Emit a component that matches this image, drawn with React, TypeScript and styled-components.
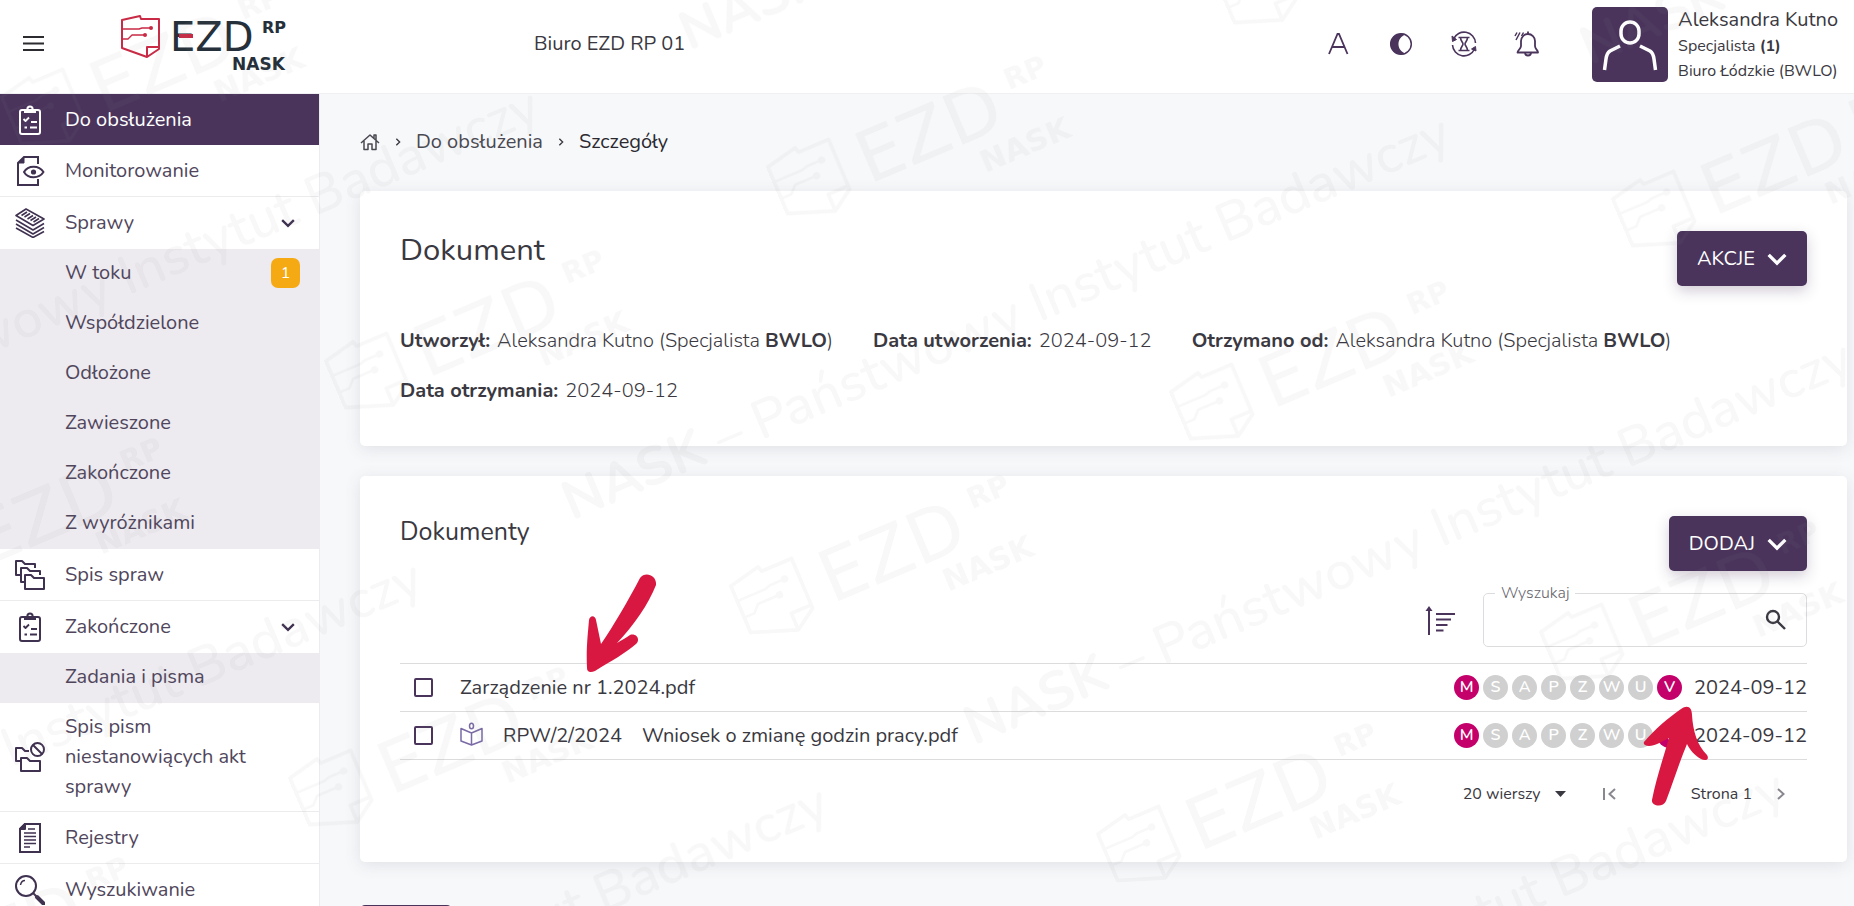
import React from 'react';
import styled, { createGlobalStyle } from 'styled-components';

const purple = '#4a345c';
const ink = '#3a3840';

const GlobalStyle = createGlobalStyle`
  *, *::before, *::after { box-sizing: border-box; }
  body {
    margin: 0;
    background: #f7f8fa;
    color: ${ink};
    font-family: Nunito, "Noto Sans", sans-serif;
    font-size: 20px;
    font-weight: 400;
    line-height: 30px;
  }
  button, input, select { font: inherit; color: inherit; }
  a { color: inherit; text-decoration: none; }
  b { font-weight: 700; }
`;

const Shell = styled.div`
  position: relative;
  height: 100vh;
  overflow: hidden;
  display: flex;
  flex-direction: column;
`;

const TopBar = styled.header`
  flex: none;
  height: 94px;
  display: flex;
  align-items: center;
  padding: 0 16px 5px 20px;
  background: #fff;
  border-bottom: 1px solid #f0f0f2;
`;

const IconButton = styled.button`
  display: grid;
  place-items: center;
  padding: 0;
  border: 0;
  background: none;
  color: ${purple};
`;

const LogoLink = styled.a`
  margin-left: 73px;
  display: block;
  height: 60px;
`;

const Unit = styled.div`
  margin-left: 244px;
  flex: 1;
`;

const Tools = styled.div`
  display: flex;
  gap: 33px;
  margin-right: 50px;
`;

const Account = styled.div`
  display: flex;
  gap: 10px;
  align-items: center;
`;

const Avatar = styled.div`
  width: 76px;
  height: 75px;
  border-radius: 5px;
  background: ${purple};
`;

const Person = styled.div`
  display: grid;
  grid-template-rows: 28px 25px 24px;
  align-items: center;
  font-size: 16px;
`;

const PersonName = styled.div`
  font-size: 20px;
`;

const Body = styled.div`
  flex: 1;
  min-height: 0;
  display: flex;
`;

const Sidebar = styled.nav`
  flex: none;
  width: 320px;
  background: #fff;
  border-right: 1px solid #ececf0;
  overflow: hidden;
`;

const NavList = styled.ul`
  list-style: none;
  margin: 0;
  padding: 0;
`;

const NavLink = styled.a<{ $active?: boolean; $line?: boolean }>`
  display: grid;
  grid-template-columns: 50px 1fr auto;
  align-items: center;
  min-height: ${p => (p.$active ? 51 : 52)}px;
  padding: 9px 24px 9px 15px;
  color: ${p => (p.$active ? '#fff' : '#50465c')};
  background: ${p => (p.$active ? purple : 'transparent')};
  border-bottom: ${p => (p.$line ? '1px solid #ececee' : '0')};
  svg { color: ${p => (p.$active ? '#fff' : '#3f3150')}; }
`;

const SubList = styled(NavList)`
  background: #edeaf0;
`;

const SubLink = styled.a`
  display: flex;
  justify-content: space-between;
  align-items: center;
  height: 50px;
  padding: 0 19px 2px 65px;
  color: #50465c;
`;

const Count = styled.span`
  width: 29px;
  height: 30px;
  border-radius: 7px;
  background: #f5aa14;
  color: #fff;
  font-size: 16px;
  text-align: center;
`;

const Main = styled.main`
  flex: 1;
  min-width: 0;
  padding: 33px 7px 0 40px;
  display: flex;
  flex-direction: column;
  gap: 30px;
`;

const Crumbs = styled.nav`
  display: flex;
  align-items: center;
  height: 30px;
  gap: 14px;
  margin-bottom: 4px;
`;

const CrumbLink = styled.a<{ $current?: boolean }>`
  display: flex;
  color: ${p => (p.$current ? '#2b2930' : '#4a4850')};
`;

const Card = styled.section<{ $bottom: number }>`
  position: relative;
  padding: 40px 40px ${p => p.$bottom}px;
  background: #fff;
  border-radius: 5px;
  box-shadow: 0 3px 16px rgba(60, 80, 90, 0.13);
`;

const CardHead = styled.div`
  display: flex;
  justify-content: space-between;
  align-items: flex-start;
`;

const Title = styled.h1`
  margin: 0;
  font-size: 31px;
  line-height: 38px;
  font-weight: 400;
`;

const Subtitle = styled.h2`
  margin: 0;
  font-size: 25px;
  line-height: 32px;
  font-weight: 400;
`;

const ActionButton = styled.button`
  display: flex;
  align-items: center;
  gap: 12px;
  height: 55px;
  padding: 0 20px;
  border: 0;
  border-radius: 5px;
  background: ${purple};
  color: #fff;
  box-shadow: 0 5px 14px rgba(74, 52, 92, 0.25);
`;

const Meta = styled.dl`
  display: flex;
  flex-wrap: wrap;
  gap: 20px 40px;
  margin: 40px 0 0;
`;

const MetaItem = styled.div`
  display: flex;
  gap: 7px;
  dt { font-weight: 700; }
  dd { margin: 0; font-weight: 300; }
`;

const Filters = styled.div`
  display: flex;
  justify-content: flex-end;
  align-items: flex-end;
  gap: 28px;
  margin: 13px 0 16px;
`;

const SortButton = styled(IconButton)`
  height: 55px;
`;

const SearchField = styled.fieldset`
  display: flex;
  align-items: center;
  width: 324px;
  height: 63px;
  margin: 0;
  padding: 0 19px 8px 17px;
  border: 1px solid #dcdcdf;
  border-radius: 5px;
  legend {
    padding: 0 6px 0 3px;
    margin-left: -6px;
    font-size: 16px;
    font-weight: 300;
    line-height: 18px;
    color: #66646c;
  }
  label { padding-left: 3px; }
  input {
    flex: 1;
    min-width: 0;
    border: 0;
    outline: 0;
    background: none;
  }
`;

const Files = styled.table`
  width: 100%;
  border-collapse: collapse;
  border-top: 1px solid #dcdcde;
`;

const FileRow = styled.tr`
  height: 48px;
  border-bottom: 1px solid #dcdcde;
  td { padding: 0; }
`;

const PickCell = styled.td`
  width: 60px;
`;

const Pick = styled.input`
  appearance: none;
  display: block;
  width: 19px;
  height: 19px;
  margin: 0 0 0 14px;
  border: 2px solid ${purple};
  border-radius: 2px;
`;

const FileName = styled.a`
  display: flex;
  align-items: center;
  gap: 20px;
  svg { margin-top: -4px; }
`;

const FlagsCell = styled.td`
  width: 240px;
`;

const Flags = styled.div`
  display: flex;
  gap: 4px;
`;

const Flag = styled.span<{ $on: boolean }>`
  width: 25px;
  height: 25px;
  border-radius: 50%;
  background: ${p => (p.$on ? '#c4006b' : '#d0d0d0')};
  color: #fff;
  font-size: 16px;
  line-height: 25px;
  font-weight: 600;
  text-align: center;
`;

const DateCell = styled.td`
  width: 112px;
  text-align: right;
  white-space: nowrap;
`;

const Pager = styled.div`
  display: flex;
  justify-content: flex-end;
  align-items: center;
  margin-top: 19px;
  padding-right: 21px;
  font-size: 16px;
`;

const PageSize = styled.label`
  display: flex;
  align-items: center;
  margin-right: 36px;
  select {
    appearance: none;
    width: 92px;
    padding: 0;
    border: 0;
    background: none;
  }
`;

const PageLabel = styled.span`
  margin: 0 24px 0 75px;
`;

const NextButton = styled.button`
  align-self: flex-start;
  flex: none;
  height: 55px;
  width: 92px;
  margin-top: 13px;
  border: 0;
  border-radius: 5px;
  background: ${purple};
`;

const StartArrow = styled.svg`
  position: absolute;
  left: 226px;
  top: 97px;
`;

const EndArrow = styled.svg`
  position: absolute;
  right: 138px;
  top: 229px;
`;

const WatermarkLayer = styled.svg`
  position: absolute;
  inset: 0;
  width: 100%;
  height: 100%;
  pointer-events: none;
`;

/* Brand artwork */

const Emblem = ({ color }: { color: string }) => (
  <g fill="none" stroke={color} strokeWidth="2" strokeLinejoin="round">
    <path d="M2 5 L20 1 L21 4 H39 V34 L27 42 L2 33 Z" />
    <path d="M27 42 V32 H39" />
    <path d="M2 14 H19 L22 13 H30 M2 24 H8 L12 20 H24" strokeWidth="1.4" />
    <circle cx="31" cy="13" r="2" fill={color} stroke="none" />
    <circle cx="25" cy="20" r="2" fill={color} stroke="none" />
  </g>
);

const BrandText = ({ color, accent }: { color: string; accent?: string }) => (
  <g fill={color} fontFamily='"DejaVu Sans", sans-serif'>
    <text x="50" y="36" fontSize="40">EZD</text>
    {accent && <rect x="59" y="19" width="14" height="4" fill={accent} />}
    <text x="142" y="18" fontSize="16" fontWeight="700">RP</text>
    <text x="112" y="55" fontSize="17" fontWeight="700">NASK</text>
  </g>
);

const Logo = () => (
  <svg width="170" height="60" aria-label="EZD RP NASK">
    <g transform="translate(0 1)">
      <Emblem color="#c92a45" />
      <BrandText color="#26303a" accent="#c92a45" />
    </g>
  </svg>
);

const logoSpots = [
  [43, 111], [809, 181], [367, 375], [-75, 563], [1256, -10], [1654, 213],
  [1212, 406], [772, 600], [331, 792], [1582, 646], [1139, 848], [-109, 982],
];

const textSpots = [
  [543, 119], [1454, 146], [1856, 371], [426, 591], [832, 816], [1789, 801],
  [1571, -324], [2472, -309],
];

const Watermark = () => (
  <WatermarkLayer aria-hidden="true">
    <g opacity="0.065">
      {logoSpots.map(([x, y]) => (
        <g key={`${x}:${y}`} transform={`translate(${x} ${y}) rotate(-23) scale(1.8) translate(-20 -21)`}>
          <Emblem color="#8a8a8a" />
          <BrandText color="#8a8a8a" />
        </g>
      ))}
      {textSpots.map(([x, y]) => (
        <text
          key={`${x}:${y}`}
          transform={`translate(${x} ${y}) rotate(-23)`}
          textAnchor="end"
          fontSize="54"
          fontWeight="500"
          fill="#8a8a8a"
        >
          <tspan fontWeight="700">NASK</tspan> – Państwowy Instytut Badawczy
        </text>
      ))}
    </g>
  </WatermarkLayer>
);

/* Interface icons */

const Glyph = ({ size = 30, sw = 2, children }: { size?: number; sw?: number; children: React.ReactNode }) => (
  <svg width={size} height={size} viewBox="0 0 30 30" fill="none" stroke="currentColor" strokeWidth={sw} strokeLinejoin="round" aria-hidden="true">
    {children}
  </svg>
);

const ClipboardIcon = () => (
  <Glyph>
    <rect x="5" y="5" width="20" height="24" rx="2" />
    <path d="M9 5 H21 V8 H9 Z" fill="currentColor" stroke="none" />
    <circle cx="15" cy="4" r="2.6" />
    <path d="M8.500 14 L10.500 16 L14 12.500 M16 17 H22 M15 22.500 H22 M9.500 22.500 H12" strokeWidth="1.800" />
  </Glyph>
);

const MonitorIcon = () => (
  <Glyph>
    <path d="M23 8 V1 H9 L3 7 V29 H23 V23" strokeLinejoin="miter" />
    <path d="M9 1 V7 H3 Z" fill="currentColor" strokeWidth="1" />
    <path d="M9 16 C13 9 24 9 28.500 16 C24 23 13 23 9 16 Z" />
    <circle cx="18.500" cy="16" r="2.600" fill="currentColor" stroke="none" />
  </Glyph>
);

const StackIcon = () => (
  <Glyph sw={1.6}>
    <path d="M11 1 L29 11 L18 17.500 L1 7.500 Z" />
    <path d="M12 4 L6.500 7.500 M15 5.500 L9.500 9 M18 7.500 L12.500 11 M21 9 L15.500 12.500 M24 10.500 L18.500 14" />
    <path d="M1 12 L18 22 L29 15.500 M1 16 L18 26 L29 19.500 M1 20 L18 29.500 L29 23.500" />
  </Glyph>
);

const FoldersIcon = () => (
  <Glyph>
    <path d="M5 15 H1 V1 H7 L10 4 H20 V8" />
    <path d="M10 22 H6 V8 H12 L15 11 H25 V15" />
    <path d="M10 15 H16 L19 18 H29 V29 H10 Z" />
  </Glyph>
);

const FoldersOffIcon = () => (
  <Glyph>
    <path d="M6 19 H1 V6 H7 L10 9 H14" />
    <path d="M6 16 H12 L15 19 H25 V29 H6 Z" />
    <circle cx="22.500" cy="7.500" r="6.500" />
    <path d="M18 3 L27 12" />
  </Glyph>
);

const RegisterIcon = () => (
  <Glyph>
    <path d="M10 1 H25 V29 H5 V6 Z" strokeLinejoin="miter" />
    <path d="M10 1 V6 H5 Z" fill="currentColor" />
    <path d="M13 6 H20 M9 10 H21 M9 13.500 H21 M9 17 H21 M9 20.500 H21 M9 24 H15" strokeWidth="1.700" />
  </Glyph>
);

const MagnifierIcon = () => (
  <Glyph>
    <circle cx="11" cy="11" r="10" />
    <path d="M5.500 10 C6 7 8 5.500 10 5.500" strokeWidth="1.500" />
    <path d="M18 18 L22 22" />
    <path d="M22 22 L28.500 28.500" strokeWidth="4" strokeLinecap="round" />
  </Glyph>
);

const Chevron = ({ width = 12, sw = 2, turn = 0 }: { width?: number; sw?: number; turn?: number }) => (
  <svg width={width} height={width} viewBox="0 0 12 12" fill="none" stroke="currentColor" strokeWidth={sw} aria-hidden="true">
    <path d="M1 3.500 L6 8.500 L11 3.500" transform={`rotate(${turn} 6 6)`} />
  </svg>
);

const HomeIcon = () => (
  <svg width="20" height="18" viewBox="0 0 20 18" fill="none" stroke="currentColor" strokeWidth="1.500" strokeLinejoin="round" aria-hidden="true">
    <path d="M1 10 L10 2 L19 10 M4 8 V16.500 H8 V11 H12 V16.500 H16 V8 M14 5 V2 H16 V7" />
  </svg>
);

const BookIcon = () => (
  <svg width="23" height="24" viewBox="0 0 23 24" fill="none" stroke="#7a6aa6" strokeWidth="1.500" strokeLinejoin="round" aria-hidden="true">
    <ellipse cx="11.500" cy="4" rx="2" ry="2.800" />
    <path d="M11.500 11 L1 6.500 V19 L11.500 23 L22 19 V6.500 Z M11.500 11 V23" />
  </svg>
);

type Item = { label: string; icon: React.ReactNode; active?: boolean; line?: boolean; open?: { label: string; count?: number }[] };

const menu: Item[] = [
  { label: 'Do obsłużenia', icon: <ClipboardIcon />, active: true },
  { label: 'Monitorowanie', icon: <MonitorIcon />, line: true },
  {
    label: 'Sprawy',
    icon: <StackIcon />,
    open: [
      { label: 'W toku', count: 1 },
      { label: 'Współdzielone' },
      { label: 'Odłożone' },
      { label: 'Zawieszone' },
      { label: 'Zakończone' },
      { label: 'Z wyróżnikami' },
    ],
  },
  { label: 'Spis spraw', icon: <FoldersIcon />, line: true },
  { label: 'Zakończone', icon: <ClipboardIcon />, open: [{ label: 'Zadania i pisma' }] },
  { label: 'Spis pism niestanowiących akt sprawy', icon: <FoldersOffIcon />, line: true },
  { label: 'Rejestry', icon: <RegisterIcon />, line: true },
  { label: 'Wyszukiwanie', icon: <MagnifierIcon />, line: true },
];

const flagLetters = ['M', 'S', 'A', 'P', 'Z', 'W', 'U', 'V'];
const flagsOn = ['M', 'V'];

const files = [
  { name: 'Zarządzenie nr 1.2024.pdf', date: '2024-09-12' },
  { number: 'RPW/2/2024', name: 'Wniosek o zmianę godzin pracy.pdf', date: '2024-09-12' },
];

const author = <>Aleksandra Kutno (Specjalista <b>BWLO</b>)</>;

const details: [string, React.ReactNode][] = [
  ['Utworzył:', author],
  ['Data utworzenia:', '2024-09-12'],
  ['Otrzymano od:', author],
  ['Data otrzymania:', '2024-09-12'],
];

export default function App() {
  return (
    <Shell>
      <GlobalStyle />
      <TopBar>
        <IconButton aria-label="Menu">
          <svg width="27" height="20" stroke="#2b2b30" strokeWidth="2" aria-hidden="true">
            <path d="M3 3 H24 M3 9.500 H24 M3 16 H24" />
          </svg>
        </IconButton>
        <LogoLink href="#" aria-label="EZD RP"><Logo /></LogoLink>
        <Unit>Biuro EZD RP 01</Unit>
        <Tools>
          <IconButton aria-label="Rozmiar tekstu">
            <Glyph sw={1.8}><path d="M6 25 L14.500 5 H16 L24.500 25 M9 18 H21.500" strokeLinejoin="miter" /></Glyph>
          </IconButton>
          <IconButton aria-label="Kontrast">
            <Glyph sw={1.5}>
              <circle cx="15" cy="15" r="10.300" />
              <path d="M15 4.500 A10.500 10.500 0 0 0 15 25.500 C19 25.500 20 25 20 24.500 C10 22 10 8 20 5.500 C20 5 18 4.500 15 4.500 Z" fill="currentColor" stroke="none" />
            </Glyph>
          </IconButton>
          <IconButton aria-label="Czas sesji">
            <Glyph sw={1.6}>
              <path d="M4.500 10 A11.500 11.500 0 0 1 26.500 14 M3.500 16 A11.500 11.500 0 0 0 25.500 20" />
              <path d="M3 7 L7.500 10.500 L3.500 12.500 Z M27 22 L22.500 20 L26.500 17.500 Z" fill="currentColor" strokeWidth="1" />
              <path d="M9.500 8.500 H20.500 M9.500 21.500 H20.500 M11.500 8.500 C11.500 12 14 13 14 15 C14 17 11.500 18 11.500 21.500 M18.500 8.500 C18.500 12 16 13 16 15 C16 17 18.500 18 18.500 21.500" />
            </Glyph>
          </IconButton>
          <IconButton aria-label="Powiadomienia">
            <Glyph sw={1.8}>
              <path d="M16 2.500 V5 M9 17 V12 A7 7 0 0 1 23 12 V17 C23 20 26 21 26 23.500 H5.500 C5.500 21 9 20 9 17 Z" />
              <path d="M13 23.500 A3 3 0 0 0 19 23.500" />
              <path d="M8 3.500 L4 11 M11.500 3.500 L9.500 7 M5 3.500 L3 7" strokeWidth="1.500" />
            </Glyph>
          </IconButton>
        </Tools>
        <Account>
          <Avatar>
            <svg width="76" height="75" fill="none" stroke="#fff" strokeWidth="3.500" aria-hidden="true">
              <rect x="29" y="15" width="18" height="21" rx="9" />
              <path d="M28 39 L18 44 C15 46 14.500 48 14 52 L12.500 63 M48 39 L58 44 C61 46 61.500 48 62 52 L63.500 63" />
            </svg>
          </Avatar>
          <Person>
            <PersonName>Aleksandra Kutno</PersonName>
            <div>Specjalista <b>(1)</b></div>
            <div>Biuro Łódzkie (BWLO)</div>
          </Person>
        </Account>
      </TopBar>
      <Body>
        <Sidebar aria-label="Menu główne">
          <NavList>
            {menu.map(item => (
              <li key={item.label}>
                <NavLink href="#" $active={item.active} $line={item.line}>
                  {item.icon}
                  <span>{item.label}</span>
                  {item.open && <Chevron width={14} />}
                </NavLink>
                {item.open && (
                  <SubList>
                    {item.open.map(sub => (
                      <li key={sub.label}>
                        <SubLink href="#">
                          {sub.label}
                          {sub.count && <Count>{sub.count}</Count>}
                        </SubLink>
                      </li>
                    ))}
                  </SubList>
                )}
              </li>
            ))}
          </NavList>
        </Sidebar>
        <Main>
          <Crumbs aria-label="Ścieżka">
            <CrumbLink href="#" aria-label="Strona główna"><HomeIcon /></CrumbLink>
            <Chevron width={8} turn={-90} />
            <CrumbLink href="#">Do obsłużenia</CrumbLink>
            <Chevron width={8} turn={-90} />
            <CrumbLink href="#" $current>Szczegóły</CrumbLink>
          </Crumbs>
          <Card $bottom={40}>
            <CardHead>
              <Title>Dokument</Title>
              <ActionButton>AKCJE <Chevron width={20} sw={2} /></ActionButton>
            </CardHead>
            <Meta>
              {details.map(([term, value]) => (
                <MetaItem key={term}>
                  <dt>{term}</dt>
                  <dd>{value}</dd>
                </MetaItem>
              ))}
            </Meta>
          </Card>
          <Card $bottom={53}>
            <CardHead>
              <Subtitle>Dokumenty</Subtitle>
              <ActionButton>DODAJ <Chevron width={20} sw={2} /></ActionButton>
            </CardHead>
            <Filters>
              <SortButton aria-label="Sortuj">
                <svg width="30" height="30" fill="none" stroke="currentColor" strokeWidth="2" aria-hidden="true">
                  <path d="M4 30 V3 M11 9 H30 M11 14.500 H26 M11 20 H22.500 M11 25.500 H18.500" />
                  <path d="M4 1 L7.500 6 H0.500 Z" fill="currentColor" stroke="none" />
                </svg>
              </SortButton>
              <SearchField>
                <legend><label htmlFor="file-search">Wyszukaj</label></legend>
                <input id="file-search" type="search" />
                <svg width="22" height="22" fill="none" stroke={ink} strokeWidth="2.400" aria-hidden="true">
                  <circle cx="8" cy="8" r="6" />
                  <path d="M12.500 12.500 L20 20" />
                </svg>
              </SearchField>
            </Filters>
            <Files>
              <tbody>
                {files.map(file => (
                  <FileRow key={file.name}>
                    <PickCell><Pick type="checkbox" aria-label={`Zaznacz ${file.name}`} /></PickCell>
                    <td>
                      <FileName href="#">
                        {file.number && <><BookIcon /><span>{file.number}</span></>}
                        <span>{file.name}</span>
                      </FileName>
                    </td>
                    <FlagsCell>
                      <Flags>
                        {flagLetters.map(letter => (
                          <Flag key={letter} $on={flagsOn.includes(letter)}>{letter}</Flag>
                        ))}
                      </Flags>
                    </FlagsCell>
                    <DateCell>{file.date}</DateCell>
                  </FileRow>
                ))}
              </tbody>
            </Files>
            <Pager>
              <PageSize>
                <select aria-label="Liczba wierszy" defaultValue="20">
                  <option value="20">20 wierszy</option>
                </select>
                <svg width="11" height="6" aria-hidden="true"><path d="M0 0 H11 L5.500 6 Z" fill={ink} /></svg>
              </PageSize>
              <IconButton aria-label="Pierwsza strona">
                <svg width="14" height="14" fill="none" stroke="#8a8790" strokeWidth="2" aria-hidden="true">
                  <path d="M2 1 V13 M13 2 L7.500 7 L13 12" />
                </svg>
              </IconButton>
              <PageLabel>Strona 1</PageLabel>
              <IconButton aria-label="Następna strona">
                <svg width="10" height="14" fill="none" stroke="#8a8790" strokeWidth="2" aria-hidden="true">
                  <path d="M2 2 L7.500 7 L2 12" />
                </svg>
              </IconButton>
            </Pager>
            <StartArrow width="71" height="100" fill="#d81840" aria-hidden="true">
              <path d="M1 95 C0 75 2 60 3 47 C4 42 9 42 10 47 L15 71 C28 52 42 28 54 5 C59 -2 71 2 70 12 C62 32 48 52 31 70 C36 67 41 64 44 62 C50 60 55 66 50 71 C40 80 25 88 9 98 C4 100 1 99 1 95 Z" />
            </StartArrow>
            <EndArrow width="66" height="102" fill="#d81840" aria-hidden="true">
              <path d="M1 37 C12 24 25 13 38 4 C45 -1 49 3 49 10 C50 26 54 40 64 50 C67 55 62 56 58 54 C51 50 47 45 44 39 C36 58 30 78 23 96 C20 103 8 101 9 95 C13 74 20 54 26 33 C18 37 12 41 6 41 C2 41 0 39 1 37 Z" />
            </EndArrow>
          </Card>
          <NextButton aria-label="Wstecz" />
        </Main>
      </Body>
      <Watermark />
    </Shell>
  );
}
